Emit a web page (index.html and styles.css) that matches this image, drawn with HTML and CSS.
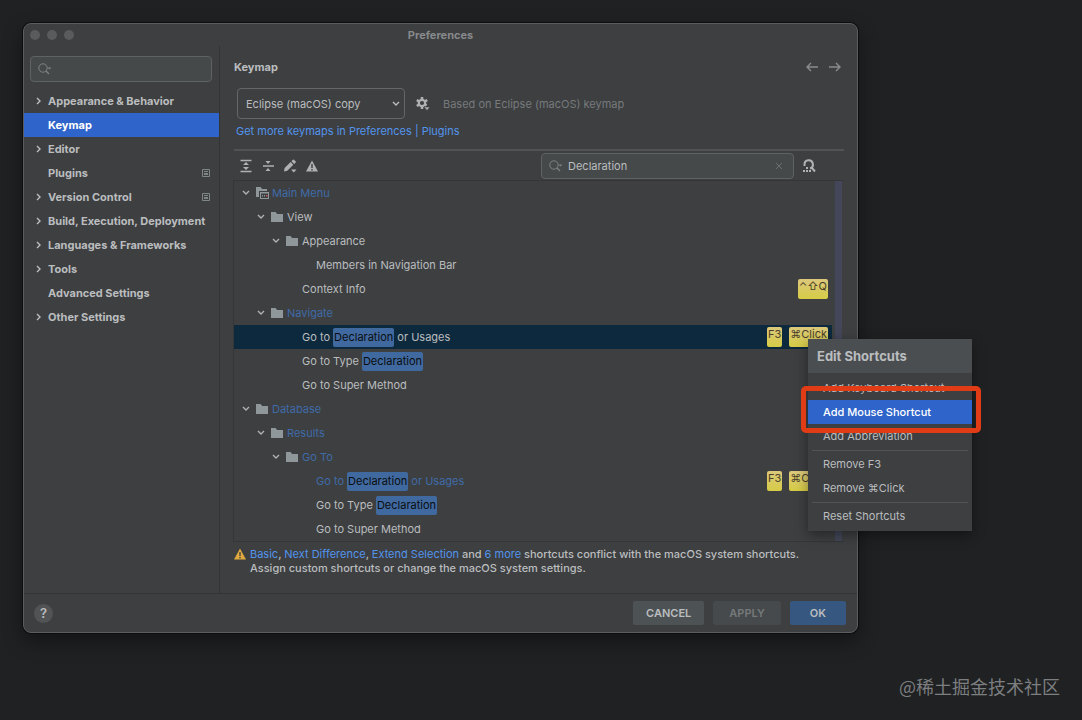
FILE: index.html
```html
<!DOCTYPE html>
<html lang="en">
<head>
    <meta charset="UTF-8">
    <title>Preferences</title>
    <link rel="stylesheet" href="styles.css">
</head>
<body>
<!-- shared icons -->
<svg class="sprite" width="0" height="0">
    <symbol id="right" viewBox="0 0 10 10"><path d="M3 2 6 5 3 8" fill="none" stroke="currentColor" stroke-width="1.4"/></symbol>
    <symbol id="down" viewBox="0 0 10 10"><path d="M2 3 5 6 8 3" fill="none" stroke="currentColor" stroke-width="1.4"/></symbol>
    <symbol id="folder" viewBox="0 0 14 12"><path d="M1 1h4.6l1.6 2H13v8H1z" fill="currentColor"/></symbol>
    <symbol id="search" viewBox="0 0 16 14"><circle cx="6" cy="6" r="4.2" fill="none" stroke="currentColor"/><path d="m9 9 3 3" stroke="currentColor" stroke-width="1.2"/><path d="M10.5 5.5h4l-2 2z" fill="currentColor"/></symbol>
    <symbol id="project" viewBox="0 0 10 10"><path d="M1.5 1.5h7v7h-7z" fill="none" stroke="currentColor"/><path d="M3 3h4v1H3zM3 5h4v2H3z" fill="currentColor"/></symbol>
</svg>

<div class="window">
    <div class="titlebar">
        <div class="lights"><i></i><i></i><i></i></div>
        <h1>Preferences</h1>
    </div>

    <div class="main">
        <div class="sidebar">
            <label class="search">
                <svg class="search_icon"><use href="#search"/></svg>
                <input type="text" aria-label="Search settings">
            </label>
            <ul class="nav">
                <li><a href="#"><svg class="arrow"><use href="#right"/></svg><span>Appearance &amp; Behavior</span></a></li>
                <li><a href="#" class="active"><svg class="arrow"></svg><span>Keymap</span></a></li>
                <li><a href="#"><svg class="arrow"><use href="#right"/></svg><span>Editor</span></a></li>
                <li><a href="#"><svg class="arrow"></svg><span>Plugins</span><svg class="project"><use href="#project"/></svg></a></li>
                <li><a href="#"><svg class="arrow"><use href="#right"/></svg><span>Version Control</span><svg class="project"><use href="#project"/></svg></a></li>
                <li><a href="#"><svg class="arrow"><use href="#right"/></svg><span>Build, Execution, Deployment</span></a></li>
                <li><a href="#"><svg class="arrow"><use href="#right"/></svg><span>Languages &amp; Frameworks</span></a></li>
                <li><a href="#"><svg class="arrow"><use href="#right"/></svg><span>Tools</span></a></li>
                <li><a href="#"><svg class="arrow"></svg><span>Advanced Settings</span></a></li>
                <li><a href="#"><svg class="arrow"><use href="#right"/></svg><span>Other Settings</span></a></li>
            </ul>
        </div>

        <div class="content">
            <div class="head">
                <h2>Keymap</h2>
                <button class="icon_btn" aria-label="Back"><svg width="14" height="14" viewBox="0 0 14 14"><path d="M13 7H2M6 3 2 7l4 4" fill="none" stroke="currentColor" stroke-width="1.4"/></svg></button>
                <button class="icon_btn" aria-label="Forward"><svg width="14" height="14" viewBox="0 0 14 14"><path d="M1 7h11M8 3l4 4-4 4" fill="none" stroke="currentColor" stroke-width="1.4"/></svg></button>
            </div>

            <div class="scheme">
                <div class="select">
                    <select aria-label="Keymap scheme">
                        <option>Eclipse (macOS) copy</option>
                    </select>
                    <svg class="arrow"><use href="#down"/></svg>
                </div>
                <button class="icon_btn" aria-label="Scheme actions">
                    <svg width="16" height="16" viewBox="0 0 16 16">
                        <circle cx="7" cy="7" r="3.2" fill="none" stroke="currentColor" stroke-width="2.2"/>
                        <path d="M7 1v2.500M7 10.500V13M1.800 4 4 5.300M10 8.700l1.500 1M1.800 10 4 8.700M10 5.300 12.200 4" stroke="currentColor" stroke-width="2.6"/>
                        <path d="M9 11h6l-3 3.500z" fill="currentColor" stroke="#3d3f41" stroke-width=".6"/>
                    </svg>
                </button>
                <span class="based">Based on Eclipse (macOS) keymap</span>
            </div>
            <a class="more" href="#">Get more keymaps in Preferences | Plugins</a>

            <div class="toolbar">
                <button class="icon_btn" aria-label="Expand all"><svg width="14" height="14" viewBox="0 0 14 14"><path d="M1.500 1.500h11M1.500 12.500h11" stroke="currentColor" stroke-width="1.6"/><path d="M4 6 7 3l3 3zM4 8l3 3 3-3z" fill="currentColor"/></svg></button>
                <button class="icon_btn" aria-label="Collapse all"><svg width="14" height="14" viewBox="0 0 14 14"><path d="M2 7h11" stroke="currentColor" stroke-width="1.5"/><path d="M4.500 2h5L7 5zM4.500 12h5L7 9z" fill="currentColor"/></svg></button>
                <button class="icon_btn" aria-label="Edit shortcut"><svg width="14" height="14" viewBox="0 0 14 14"><path d="m1 12.500.6-3.400 6-6 2.700 2.700-6 6zM8.400 2.300 10 .7q.5-.5 1 0L12.700 2.400q.5.500 0 1L11.100 5zM8 10.500h5.500L10.800 13.600z" fill="currentColor"/></svg></button>
                <button class="icon_btn" aria-label="Show conflicts"><svg width="14" height="14" viewBox="0 0 14 14"><path d="M7 1.500 13 12.500H1z" fill="currentColor"/><path d="M7 5v4M7 10v1.500" stroke="#3d3f41" stroke-width="1.4"/></svg></button>
                <label class="search filter">
                    <svg class="search_icon"><use href="#search"/></svg>
                    <input type="text" value="Declaration" aria-label="Filter actions">
                    <button class="clear" aria-label="Clear"><svg width="8" height="8" viewBox="0 0 8 8"><path d="m1 1 6 6M7 1 1 7" stroke="currentColor" stroke-width=".8"/></svg></button>
                </label>
                <button class="icon_btn" aria-label="Find by shortcut"><svg width="14" height="14" viewBox="0 0 14 14"><path d="M2.500 7V5.500a4.200 4.200 0 1 1 5.500 4M9.500 8.500l3.500 4" fill="none" stroke="currentColor" stroke-width="2"/><path d="M1 11h2v2H1zM4 11h2v2H4zM7 11h2v2H7zM4 8h2v2H4z" fill="currentColor"/></svg></button>
            </div>

            <div class="tree">
                <ul class="rows">
                    <li class="row l1 changed"><svg class="arrow"><use href="#down"/></svg><svg class="folder" viewBox="0 0 14 12"><path d="M1 0h4.600l1.600 2H12v2H4v6H1z" fill="currentColor"/><path d="M5 5h9v1.500H5zM5 6h1v5h7V6h1v6H5z" fill="currentColor"/><path d="M7 8h1v1.500H7zM9 8h1v1.500H9z" fill="currentColor"/><path d="M11 8h1.500v1.500H11z" fill="#c75450"/></svg>Main Menu</li>
                    <li class="row l2"><svg class="arrow"><use href="#down"/></svg><svg class="folder"><use href="#folder"/></svg>View</li>
                    <li class="row l3"><svg class="arrow"><use href="#down"/></svg><svg class="folder"><use href="#folder"/></svg>Appearance</li>
                    <li class="row l5">Members in Navigation Bar</li>
                    <li class="row l4">Context Info<span class="keys"><kbd>⌃⇧Q</kbd></span></li>
                    <li class="row l2 changed"><svg class="arrow"><use href="#down"/></svg><svg class="folder"><use href="#folder"/></svg>Navigate</li>
                    <li class="row l4 selected">Go to&nbsp;<mark>Declaration</mark>&nbsp;or Usages<span class="keys"><kbd>F3</kbd><kbd>⌘Click</kbd></span>
                        <div class="menu">
                            <h3>Edit Shortcuts</h3>
                            <button>Add Keyboard Shortcut</button>
                            <button class="current">Add Mouse Shortcut</button>
                            <button>Add Abbreviation</button>
                            <hr>
                            <button>Remove F3</button>
                            <button>Remove ⌘Click</button>
                            <hr>
                            <button>Reset Shortcuts</button>
                        </div>
                    </li>
                    <li class="row l4">Go to Type&nbsp;<mark>Declaration</mark></li>
                    <li class="row l4">Go to Super Method</li>
                    <li class="row l1 changed"><svg class="arrow"><use href="#down"/></svg><svg class="folder"><use href="#folder"/></svg>Database</li>
                    <li class="row l2 changed"><svg class="arrow"><use href="#down"/></svg><svg class="folder"><use href="#folder"/></svg>Results</li>
                    <li class="row l3 changed"><svg class="arrow"><use href="#down"/></svg><svg class="folder"><use href="#folder"/></svg>Go To</li>
                    <li class="row l5 changed">Go to&nbsp;<mark>Declaration</mark>&nbsp;or Usages<span class="keys"><kbd>F3</kbd><kbd>⌘Click</kbd></span></li>
                    <li class="row l5">Go to Type&nbsp;<mark>Declaration</mark></li>
                    <li class="row l5">Go to Super Method</li>
                </ul>
                <div class="scrollbar"></div>
            </div>

            <div class="conflict">
                <svg width="12" height="12" viewBox="0 0 12 12"><path d="M6 .5 12 11.500H0z" fill="#e0a93e"/><path d="M6 4v4M6 9v1.500" stroke="#3d3f41" stroke-width="1.3"/></svg>
                <p><a href="#">Basic</a>, <a href="#">Next Difference</a>, <a href="#">Extend Selection</a> and <a href="#">6 more</a> shortcuts conflict with the macOS system shortcuts.<br>Assign custom shortcuts or change the macOS system settings.</p>
            </div>
        </div>
    </div>

    <div class="footer">
        <button class="help" aria-label="Help">?</button>
        <button class="btn">CANCEL</button>
        <button class="btn" disabled>APPLY</button>
        <button class="btn ok">OK</button>
    </div>
</div>

<p class="watermark">@稀土掘金技术社区</p>
</body>
</html>
```
FILE: styles.css
```css
* {
    margin: 0;
    padding: 0;
    box-sizing: border-box;
}

body {
    display: flex;
    flex-direction: column;
    justify-content: space-between;
    min-height: 100vh;
    padding: 23px 22px 20px 23px;
    background: #1f2122;
    color: #bbbdbf;
    font: 11px/14px Inter, "Liberation Sans", sans-serif;
}

ul {
    list-style: none;
}

a {
    color: #5394ec;
    text-decoration: none;
}

button, input, select {
    border: none;
    background: none;
    color: inherit;
    font: inherit;
    outline: none;
}

svg {
    flex: none;
}

.sprite {
    position: absolute;
}

.window {
    margin-right: 202px;
    border: 1px solid #5b5d5f;
    border-radius: 8px;
    background: #3d3f41;
    box-shadow: 0 0 0 1px #0c0d0e, 0 8px 20px rgba(0, 0, 0, .4);
}

/* title bar */
.titlebar {
    display: grid;
    grid-template-columns: 1fr auto 1fr;
    align-items: center;
    height: 22px;
}

.titlebar h1 {
    color: #87898b;
    font-size: 11px;
    font-weight: 700;
}

.lights {
    display: flex;
    gap: 7px;
    padding-left: 6px;
}

.lights i {
    width: 10px;
    height: 10px;
    border-radius: 50%;
    background: #595b5d;
}

.main {
    display: flex;
    min-height: 547px;
}

/* left side */
.sidebar {
    flex: none;
    width: 196px;
    padding-top: 10px;
    border-right: 1px solid #313335;
}

.search {
    display: flex;
    align-items: center;
    height: 26px;
    margin: 0 7px 7px 6px;
    padding: 0 6px;
    border: 1px solid #5f6264;
    border-radius: 4px;
    background: #45494a;
}

.search input {
    flex: 1;
    min-width: 0;
    padding-left: 4px;
}

.search_icon {
    width: 16px;
    height: 14px;
    color: #7f8386;
}

.nav a {
    display: flex;
    align-items: center;
    height: 24px;
    padding: 0 8px 0 10px;
    color: #bbbdbf;
    font-weight: 700;
    white-space: nowrap;
}

.nav span {
    flex: 1;
    padding-left: 4px;
}

.nav .active {
    background: #2f65ca;
    color: #fff;
}

.arrow {
    width: 10px;
    height: 10px;
}

.project {
    width: 10px;
    height: 10px;
    color: #7f8688;
}

/* right side */
.content {
    flex: 1;
    min-width: 0;
    padding: 2px 13px 0 14px;
}

.head {
    display: flex;
    align-items: center;
    gap: 9px;
    height: 38px;
}

.head h2 {
    flex: 1;
    font-size: 11px;
    font-weight: 700;
}

.icon_btn {
    display: flex;
    color: #afb1b3;
}

.head .icon_btn {
    color: #8a8c8e;
}

.head .icon_btn:last-child {
    margin-right: 2px;
}

.scheme {
    display: flex;
    align-items: center;
    height: 35px;
    padding-left: 3px;
}

.select {
    display: grid;
    align-items: center;
    width: 168px;
    margin-right: 10px;
}

.select select {
    grid-area: 1 / 1;
    height: 31px;
    padding: 0 24px 0 8px;
    border: 1px solid #646668;
    border-radius: 4px;
    appearance: none;
}

.select .arrow {
    grid-area: 1 / 1;
    justify-self: end;
    margin-right: 4px;
    pointer-events: none;
}

.based {
    margin-left: 12px;
    color: #777a7c;
}

.more {
    display: block;
    margin-bottom: 8px;
    padding-left: 2px;
    line-height: 20px;
}

.toolbar {
    display: flex;
    align-items: center;
    gap: 8px;
    height: 31px;
    padding-left: 5px;
    border-top: 2px solid #515355;
}

.filter {
    width: 253px;
    margin: 0 0 0 auto;
}

.toolbar > .icon_btn:last-child {
    margin-right: 28px;
}

.clear {
    padding: 2px 4px;
    color: #777b7d;
}

.tree {
    display: flex;
    margin-left: -1px;
    border: 1px solid #343638;
    border-width: 1px 0 1px 1px;
}

.rows {
    flex: 1;
}

.row {
    position: relative;
    display: flex;
    align-items: center;
    height: 24px;
    white-space: nowrap;
}

.l1 {
    padding-left: 7px;
}

.l2 {
    padding-left: 22px;
}

.l3 {
    padding-left: 37px;
}

.l4 {
    padding-left: 68px;
}

.l5 {
    padding-left: 82px;
}

.changed {
    color: #406ba8;
}

.row .arrow {
    margin-right: 4px;
    color: #afb1b3;
}

.folder {
    width: 14px;
    height: 12px;
    margin-right: 3px;
    color: #8f979b;
}

.selected {
    background: #0d293e;
}

mark {
    padding: 0 1px;
    border-radius: 2px;
    background: #40699f;
    color: #0b0d10;
    line-height: 19px;
}

.keys {
    display: flex;
    gap: 7px;
    margin-left: auto;
    padding-right: 4px;
}

kbd {
    height: 20px;
    padding: 0 1px;
    border-radius: 2px;
    background: linear-gradient(#dcc87c, #d6cc45);
    color: #4a3f2a;
    font: 11px/14px Inter, "Liberation Sans", sans-serif;
}

.scrollbar {
    width: 7px;
    margin: 0 2px 0 3px;
    background: #434759;
}

.conflict {
    display: flex;
    gap: 4px;
    padding-top: 5px;
}

.conflict svg {
    margin-top: 1px;
}

.conflict p {
    font-weight: 500;
}

.conflict a {
    font-weight: 400;
}

/* popup */
.menu {
    position: absolute;
    top: 14px;
    right: -140px;
    z-index: 2;
    width: 164px;
    padding-bottom: 3px;
    background: #3d3f41;
    box-shadow: 0 4px 12px rgba(0, 0, 0, .4);
}

.menu h3 {
    margin-bottom: 3px;
    padding-left: 9px;
    background: #4a4e51;
    font-size: 13px;
    font-weight: 700;
    line-height: 34px;
}

.menu button {
    display: block;
    width: 100%;
    height: 24px;
    padding-left: 15px;
    text-align: left;
}

.menu hr {
    margin: 2px 4px 1px;
    border: none;
    border-top: 1px solid #515355;
}

.menu .current {
    position: relative;
    background: #2f65ca;
    color: #fff;
    font-weight: 500;
}

/* red frame round the current item */
.menu .current::after {
    content: "";
    position: absolute;
    inset: -14px -9px -9px -7px;
    border: 5px solid #e23c17;
    border-radius: 5px;
}

/* bottom buttons */
.footer {
    display: flex;
    align-items: center;
    gap: 9px;
    height: 39px;
    padding: 0 11px 0 10px;
    border-top: 1px solid #333537;
}

.help {
    width: 19px;
    height: 19px;
    margin-right: auto;
    border-radius: 50%;
    background: #515355;
    font-size: 13px;
    font-weight: 600;
}

.btn {
    height: 24px;
    padding: 0 13px;
    border-radius: 2px;
    background: #4d5355;
    font-weight: 600;
}

.btn:disabled {
    padding: 0 16px;
    background: #464a4c;
    color: #75797b;
}

.ok {
    padding: 0 20px;
    background: #365880;
}

.watermark {
    align-self: flex-end;
    color: #7c7e80;
    font: 18px/28px "Noto Sans CJK SC", sans-serif;
}
```
